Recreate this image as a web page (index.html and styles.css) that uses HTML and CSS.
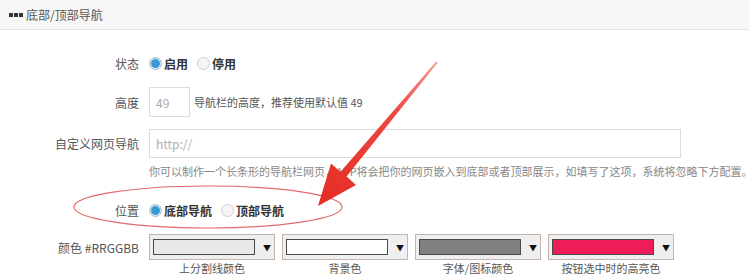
FILE: index.html
```html
<!DOCTYPE html>
<html lang="zh">
<head>
<meta charset="utf-8">
<link rel="stylesheet" href="styles.css">
</head>
<body>
<div class="panel">
  <div class="panel-head"><span class="dots"><i></i><i></i><i></i></span>底部/顶部导航</div>
  <div class="form">
    <div class="row r-state">
      <span class="label">状态</span>
      <span class="radio on"></span><b class="opt">启用</b>
      <span class="radio"></span><b class="opt">停用</b>
    </div>
    <div class="row r-height">
      <span class="label">高度</span>
      <span class="input small">49</span>
      <span class="hint">导航栏的高度，推荐使用默认值 49</span>
    </div>
    <div class="row r-url">
      <span class="label">自定义网页导航</span>
      <span class="input wide">http://</span>
    </div>
    <div class="row r-help">
      <span class="label"></span>
      <span class="help">你可以制作一个长条形的导航栏网页，APP将会把你的网页嵌入到底部或者顶部展示，如填写了这项，系统将忽略下方配置。</span>
    </div>
    <div class="row r-pos">
      <span class="label">位置</span>
      <span class="radio on"></span><b class="opt">底部导航</b>
      <span class="radio"></span><b class="opt">顶部导航</b>
    </div>
    <div class="row r-color">
      <span class="label">颜色 #RRGGBB</span>
      <div class="colors">
        <div class="cpick"><div class="sel"><span class="sw" style="background:#e8e8e8"></span><span class="caret">▼</span></div><div class="cap">上分割线颜色</div></div>
        <div class="cpick"><div class="sel"><span class="sw" style="background:#ffffff"></span><span class="caret">▼</span></div><div class="cap">背景色</div></div>
        <div class="cpick"><div class="sel"><span class="sw" style="background:#808080"></span><span class="caret">▼</span></div><div class="cap">字体/图标颜色</div></div>
        <div class="cpick"><div class="sel"><span class="sw" style="background:#ee1d5a"></span><span class="caret">▼</span></div><div class="cap">按钮选中时的高亮色</div></div>
      </div>
    </div>
  </div>
  <svg class="overlay" width="750" height="279" viewBox="0 0 750 279">
    <defs>
      <linearGradient id="ag" x1="437" y1="62" x2="318" y2="205" gradientUnits="userSpaceOnUse">
        <stop offset="0" stop-color="#f39a94"/>
        <stop offset="0.35" stop-color="#ec4a40"/>
        <stop offset="1" stop-color="#e52b25"/>
      </linearGradient>
    </defs>
    <ellipse cx="208" cy="207" rx="134" ry="21" fill="none" stroke="#e26a6a" stroke-width="1.2"/>
    <polygon fill="url(#ag)" points="437.8,62.6 346.6,176.6 356,185 318,206 331,163.5 340.6,171.8 436.2,61.4"/>
  </svg>
</div>
</body>
</html>
```
FILE: styles.css
```css
html, body { margin: 0; padding: 0; background: #fff; }
body { font-family: "Microsoft YaHei", "Noto Sans CJK SC", "Noto Sans", sans-serif; font-size: 12px; color: #555; }
.panel { position: relative; width: 750px; height: 279px; overflow: hidden; }
.panel-head { height: 30px; box-sizing: border-box; border-bottom: 1px solid #e6e6e6; background: #f7f7f7; display: flex; align-items: center; padding-left: 9px; color: #555; font-size: 12px; }
.dots { display: inline-flex; gap: 1px; margin-right: 3px; }
.dots i { display: block; width: 4px; height: 4px; background: #333; }
.form { display: flex; flex-direction: column; }
.row { display: flex; align-items: center; }
.label { width: 139px; flex: none; text-align: right; margin-right: 10px; color: #555; }
.r-state { margin-top: 23px; height: 20px; }
.r-height { margin-top: 14px; height: 30px; }
.r-url { margin-top: 12px; height: 29px; }
.r-help { margin-top: 5px; height: 16px; }
.r-pos { margin-top: 21px; height: 20px; }
.r-color { margin-top: 14px; align-items: flex-start; }
.r-color .label { margin-top: 5px; }
.radio { width: 11px; height: 11px; border-radius: 50%; border: 1px solid #d0d0d0; background: #f4f4f4; box-sizing: content-box; margin-right: 2px; flex: none; }
.radio.on { background: #3a98d5; border-color: #b9c8d4; box-shadow: inset 0 0 0 1px #e8f0f6; }
.opt { font-weight: bold; color: #333; margin-right: 9px; font-size: 12px; }
.input { box-sizing: border-box; border: 1px solid #dcdcdc; height: 100%; display: flex; align-items: center; padding-left: 6px; color: #aaa; background: #fff; }
.input.small { width: 41px; }
.input.wide { width: 532px; color: #b0b0b0; }
.hint { margin-left: 4px; color: #555; font-size: 11px; }
.help { color: #888; font-size: 11px; white-space: nowrap; }
.colors { display: flex; gap: 7px; }
.cpick { width: 126px; display: flex; flex-direction: column; align-items: center; }
.sel { width: 126px; height: 26px; box-sizing: border-box; border: 1px solid #c4b4ab; background: #efefef; display: flex; align-items: center; padding-left: 3px; }
.sw { width: 102px; height: 16px; border: 1px solid #4a4a4a; box-sizing: border-box; }
.caret { font-size: 8px; color: #111; margin-left: 8px; }
.cap { margin-top: 1px; font-size: 11px; color: #555; line-height: 14px; }
.overlay { position: absolute; left: 0; top: 0; pointer-events: none; }
```
